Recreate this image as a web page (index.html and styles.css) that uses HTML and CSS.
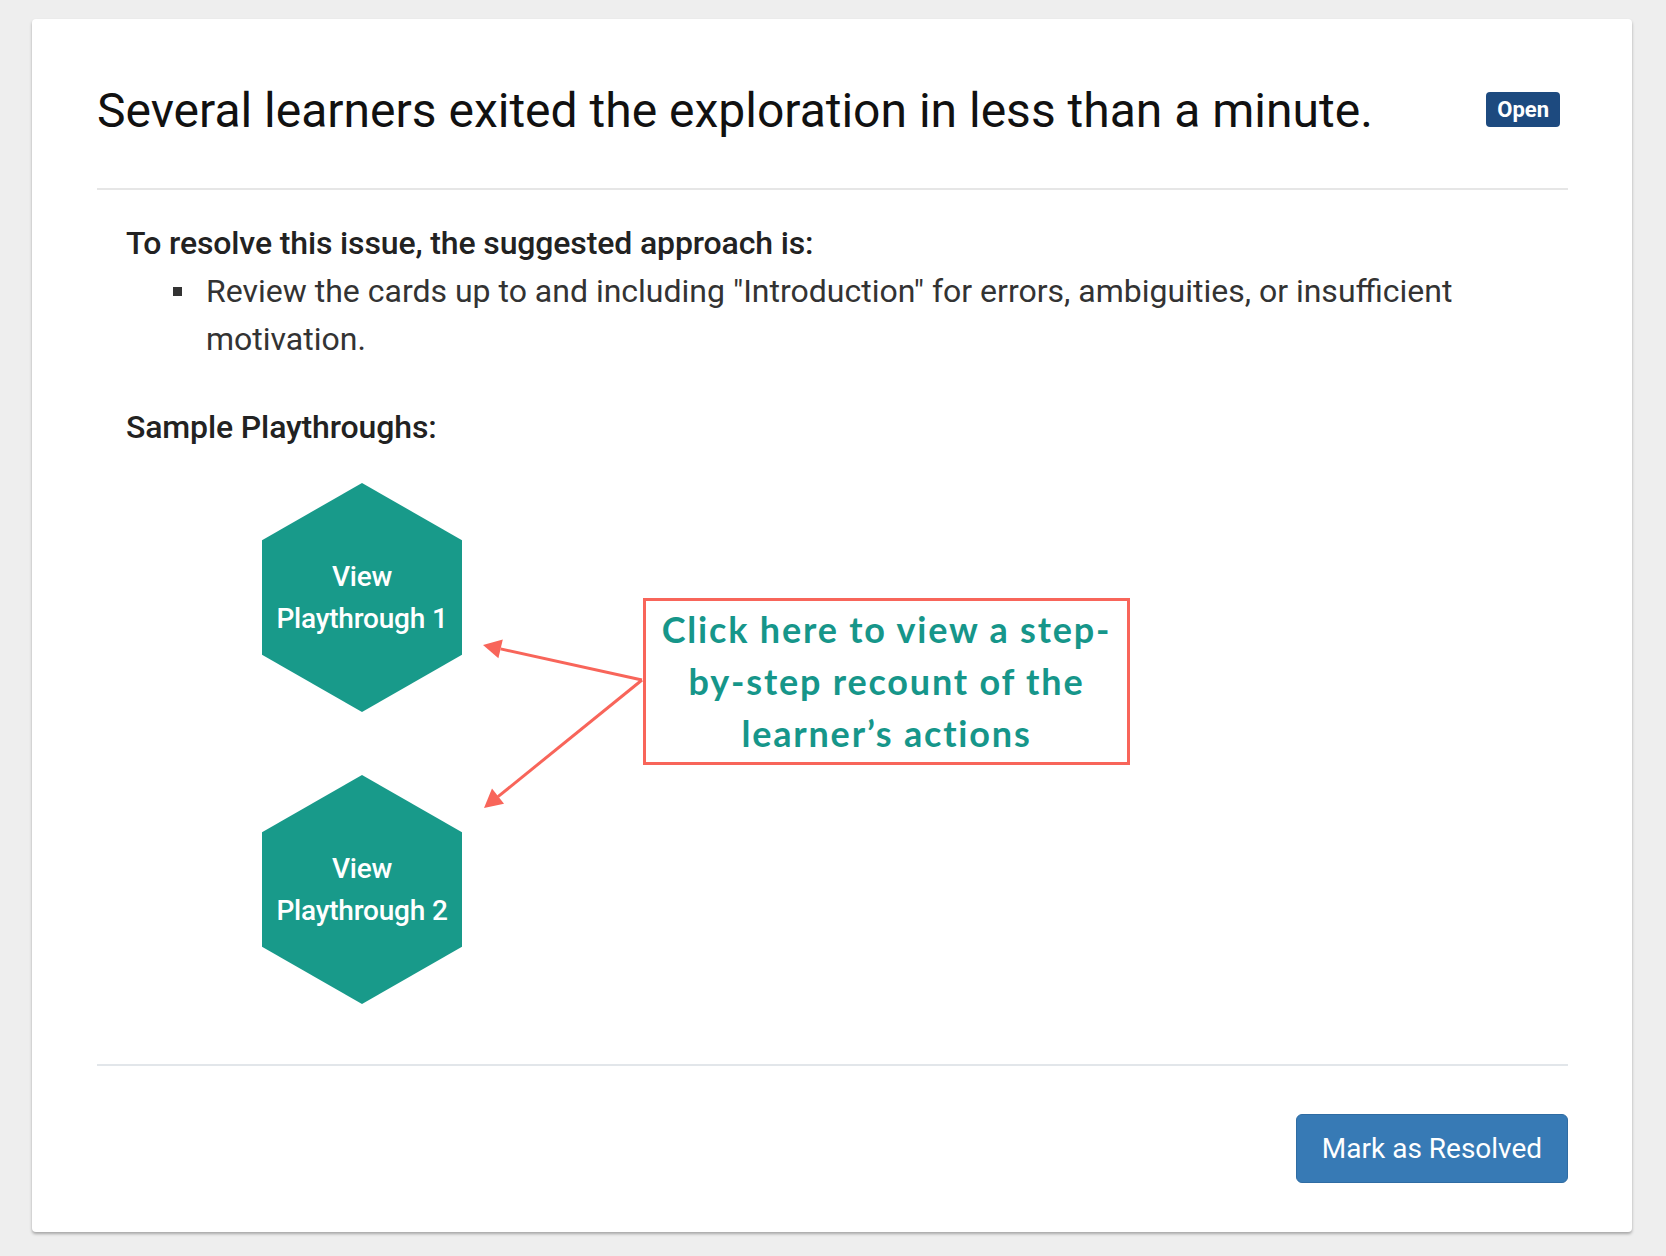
FILE: index.html
```html
<!DOCTYPE html>
<html lang="en">
<head>
<meta charset="utf-8">
<title>Issue</title>
<link rel="stylesheet" href="styles.css">
</head>
<body>
<div class="card">
  <div class="card-header">
    <h1 class="title">Several learners exited the exploration in less than a minute.</h1>
    <span class="badge">Open</span>
  </div>
  <div class="card-body">
    <h2 class="section-heading">To resolve this issue, the suggested approach is:</h2>
    <ul class="suggestions">
      <li><span class="bullet"></span><span class="suggestion-text">Review the cards up to and including "Introduction" for errors, ambiguities, or insufficient motivation.</span></li>
    </ul>
    <h2 class="section-heading samples-heading">Sample Playthroughs:</h2>
    <div class="playthroughs">
      <div class="hex-column">
        <button class="hex"><span>View</span><span>Playthrough 1</span></button>
        <button class="hex"><span>View</span><span>Playthrough 2</span></button>
      </div>
      <svg class="arrows" width="420" height="360" viewBox="0 0 420 360" aria-hidden="true">
        <line x1="380" y1="197" x2="238.6" y2="165.9" class="arrow-line"/>
        <polygon points="221,162 240.8,156.6 236.4,175.2" class="arrow-head"/>
        <line x1="380" y1="197" x2="236" y2="313.7" class="arrow-line"/>
        <polygon points="222,325 242,320.7 230,305.5" class="arrow-head"/>
      </svg>
      <div class="callout">
        <span class="callout-line">Click here to view a step-</span>
        <span class="callout-line">by-step recount of the</span>
        <span class="callout-line">learner’s actions</span>
      </div>
    </div>
  </div>
  <div class="card-footer">
    <button class="btn-resolve">Mark as Resolved</button>
  </div>
</div>
</body>
</html>
```
FILE: styles.css
```css
html, body {
  margin: 0;
  padding: 0;
}
body {
  background: #eeeeee;
  font-family: Roboto, "Liberation Sans", Arial, sans-serif;
  padding: 19px 34px 24px 32px;
}
.card {
  background: #ffffff;
  border-radius: 4px;
  box-shadow: 0 2px 3px rgba(0, 0, 0, 0.3);
  width: 1600px;
  box-sizing: border-box;
  padding: 64px 64px 49px 65px;
}
.card-header {
  display: flex;
  align-items: center;
  justify-content: space-between;
  padding-bottom: 49px;
  border-bottom: 2px solid #e6e6e6;
}
.title {
  margin: 0;
  font-weight: 400;
  font-size: 48px;
  line-height: 56px;
  color: #111111;
}
.badge {
  background: #1d4a7f;
  color: #ffffff;
  font-weight: 700;
  font-size: 22px;
  line-height: 35px;
  height: 35px;
  padding: 0 11px;
  border-radius: 4px;
  margin-right: 8px;
  margin-top: -3px;
}
.card-body {
  padding: 29px 0 0 29px;
}
.section-heading {
  margin: 0;
  font-size: 32px;
  font-weight: 500;
  line-height: 48px;
  color: #222222;
  letter-spacing: -0.13px;
}
.suggestions {
  list-style: none;
  margin: 0;
  padding: 0 0 0 47px;
}
.suggestions li {
  display: flex;
  align-items: flex-start;
  font-size: 32px;
  line-height: 48px;
  color: #333333;
}
.bullet {
  flex: none;
  width: 9px;
  height: 9px;
  background: #333333;
  margin-top: 20px;
  margin-right: 24px;
}
.samples-heading {
  margin-top: 40px;
}
.playthroughs {
  position: relative;
  margin-top: 32px;
  padding-left: 136px;
  height: 521px;
}
.hex-column {
  display: flex;
  flex-direction: column;
  gap: 63px;
}
.hex {
  width: 200px;
  height: 229px;
  border: none;
  padding: 0;
  background: #189a8a;
  clip-path: polygon(50% 0, 100% 25%, 100% 75%, 50% 100%, 0 75%, 0 25%);
  color: #ffffff;
  font-family: Roboto, "Liberation Sans", Arial, sans-serif;
  font-size: 28px;
  font-weight: 500;
  line-height: 42px;
  letter-spacing: -0.2px;
  display: flex;
  flex-direction: column;
  align-items: center;
  justify-content: center;
  cursor: pointer;
}
.arrows {
  position: absolute;
  left: 136px;
  top: 0;
  pointer-events: none;
}
.arrow-line {
  stroke: #f8655a;
  stroke-width: 3;
}
.arrow-head {
  fill: #f8655a;
}
.callout {
  position: absolute;
  left: 517px;
  top: 115px;
  width: 487px;
  height: 167px;
  box-sizing: border-box;
  border: 3px solid #f8655a;
  display: flex;
  flex-direction: column;
  align-items: center;
  justify-content: center;
  font-family: Lato, "Open Sans", sans-serif;
  font-weight: 700;
  font-size: 36px;
  line-height: 52px;
  letter-spacing: 1.8px;
  color: #16968a;
  padding-bottom: 2px;
}
.callout-line {
  display: block;
  white-space: nowrap;
}
.card-footer {
  margin-top: 60px;
  border-top: 2px solid #e2e6ea;
  padding-top: 48px;
  display: flex;
  justify-content: flex-end;
}
.btn-resolve {
  width: 272px;
  height: 69px;
  background: #377ab5;
  border: 1px solid #2f6ca3;
  border-radius: 6px;
  color: #ffffff;
  font-family: Roboto, "Liberation Sans", Arial, sans-serif;
  font-size: 28px;
  font-weight: 400;
  cursor: pointer;
}
```
